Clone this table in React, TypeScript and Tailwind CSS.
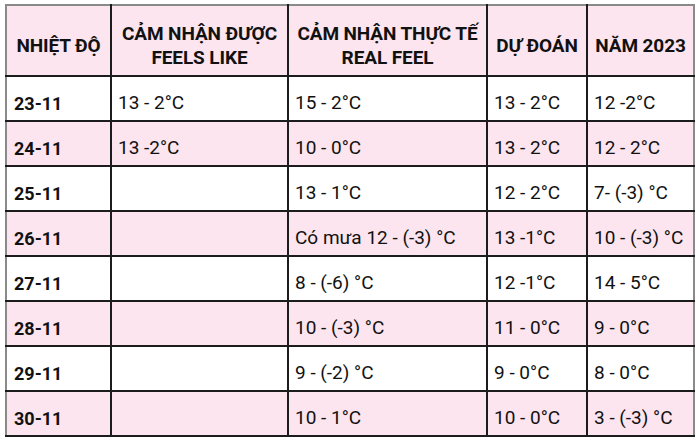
const headers = [
  ["NHIỆT ĐỘ"],
  ["CẢM NHẬN ĐƯỢC", "FEELS LIKE"],
  ["CẢM NHẬN THỰC TẾ", "REAL FEEL"],
  ["DỰ ĐOÁN"],
  ["NĂM 2023"],
];

const rows = [
  ["23-11", "13 - 2°C", "15 - 2°C", "13 - 2°C", "12 -2°C"],
  ["24-11", "13 -2°C", "10 - 0°C", "13 - 2°C", "12 - 2°C"],
  ["25-11", "", "13 - 1°C", "12 - 2°C", "7- (-3) °C"],
  ["26-11", "", "Có mưa 12 - (-3) °C", "13 -1°C", "10 - (-3) °C"],
  ["27-11", "", "8 - (-6) °C", "12 -1°C", "14 - 5°C"],
  ["28-11", "", "10 - (-3) °C", "11 - 0°C", "9 - 0°C"],
  ["29-11", "", "9 - (-2) °C", "9 - 0°C", "8 - 0°C"],
  ["30-11", "", "10 - 1°C", "10 - 0°C", "3 - (-3) °C"],
];

const widths = ["w-[105px]", "w-[177px]", "w-[199px]", "w-[100px]", "w-[107px]"];

export default function App() {
  return (
    <div className="w-[698px] h-[441px] bg-white pt-[4px] pl-[5px] font-['Roboto',sans-serif] text-[#111]">
      <table className="table-fixed border-collapse w-[688px] border-2 border-[#8a8a8a]">
        <colgroup>
          {widths.map((w, i) => (
            <col key={i} className={w} />
          ))}
        </colgroup>
        <thead>
          <tr className="h-[71px] bg-[#fce5ee]">
            {headers.map((h, i) => (
              <th
                key={i}
                className="border-2 border-[#1c1c1c] first:border-l-[#8a8a8a] last:border-r-[#8a8a8a] border-t-[#8a8a8a] px-1 pt-[10px] pb-0 text-center align-middle text-[19px] font-bold leading-[24px] tracking-[-0.1px]"
              >
                {h.map((line, j) => (
                  <div key={j}>{line}</div>
                ))}
              </th>
            ))}
          </tr>
        </thead>
        <tbody>
          {rows.map((r, i) => (
            <tr key={i} className={i % 2 === 1 ? "h-[45px] bg-[#fce5ee]" : "h-[45px] bg-white"}>
              {r.map((c, j) => (
                <td
                  key={j}
                  className={
                    j === 0
                      ? "border-2 border-[#1c1c1c] border-l-[#8a8a8a] pl-[7px] pt-[9px] pb-0 align-middle text-[18px] font-bold"
                      : j === 4
                      ? "border-2 border-[#1c1c1c] border-r-[#8a8a8a] pl-[6px] pt-[9px] pb-0 align-middle text-[19px]"
                      : "border-2 border-[#1c1c1c] pl-[6px] pt-[9px] pb-0 align-middle text-[19px]"
                  }
                >
                  {c}
                </td>
              ))}
            </tr>
          ))}
        </tbody>
      </table>
    </div>
  );
}
